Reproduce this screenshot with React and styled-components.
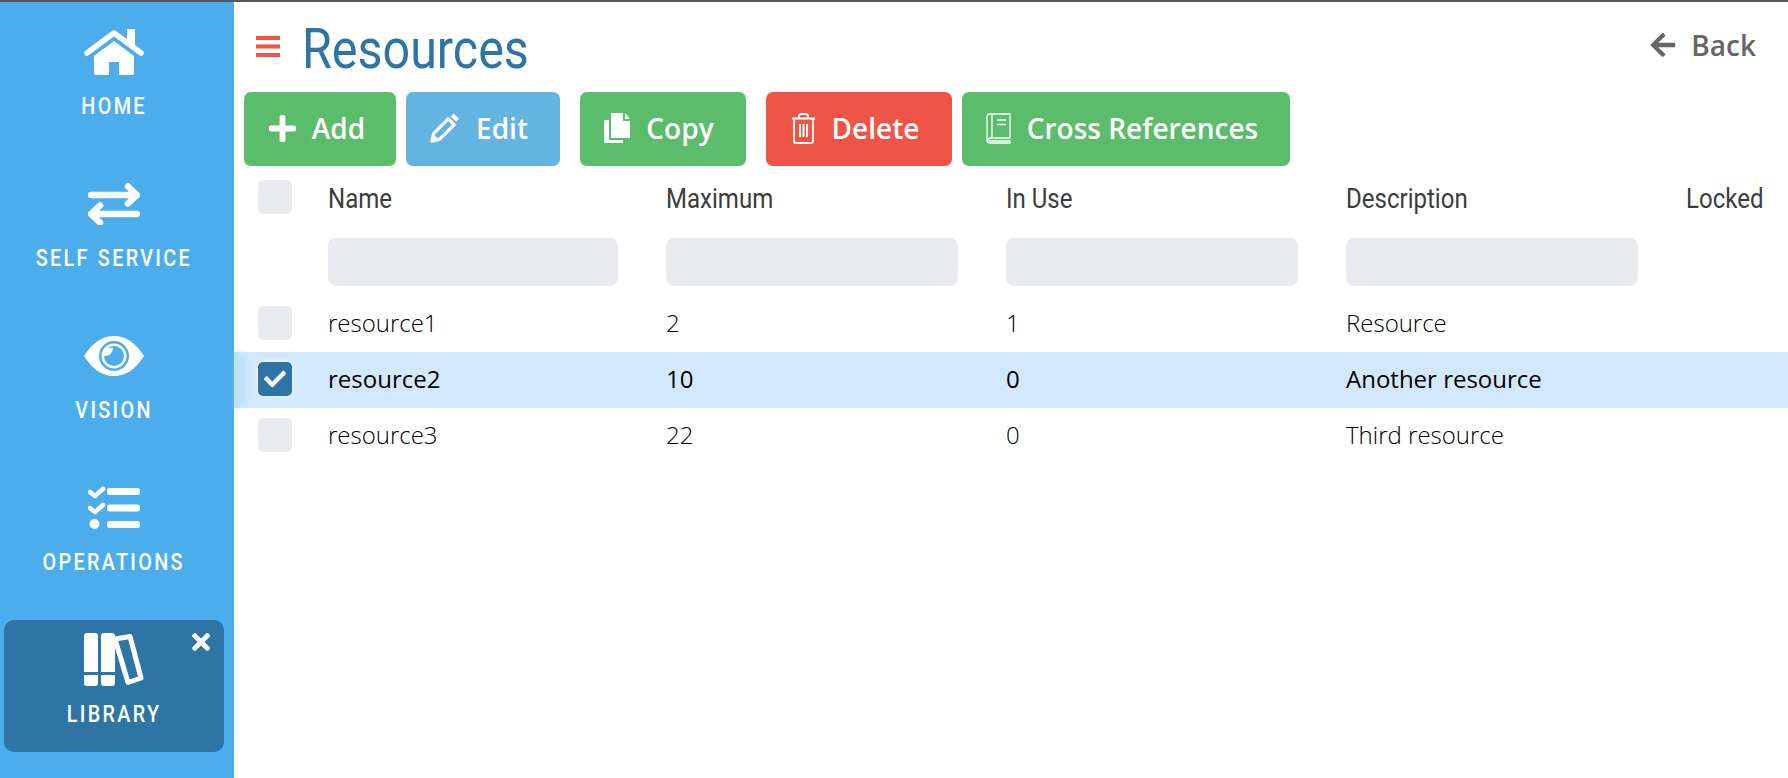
import React from 'react';
import styled, { createGlobalStyle } from 'styled-components';
import { FaPlus, FaArrowLeft, FaCheck, FaTimes } from 'react-icons/fa';

const GlobalStyle = createGlobalStyle`
  html, body {
    margin: 0;
    padding: 0;
    height: 100%;
    overflow: hidden;
    background: #fff;
  }
  #root { height: 100%; }
`;

const narrow = 'Roboto, "Liberation Sans", sans-serif';
const body = '"Open Sans", "Noto Sans", sans-serif';

const Page = styled.div`
  height: 100%;
  box-sizing: border-box;
  border-top: 2px solid #58585a;
  display: flex;
`;

const Sidebar = styled.nav`
  width: 234px;
  flex: none;
  box-sizing: border-box;
  background: #4badeb;
  padding: 0 10px 0 4px;
  display: flex;
  flex-direction: column;
`;

const NavItem = styled.a`
  position: relative;
  height: ${({ $active }) => ($active ? '132px' : '152px')};
  margin-top: ${({ $active }) => ($active ? '10px' : '0')};
  box-sizing: border-box;
  padding-top: ${({ $top }) => $top}px;
  border-radius: 10px;
  background: ${({ $active }) => ($active ? '#2e74a5' : 'transparent')};
  color: #fff;
  display: flex;
  flex-direction: column;
  align-items: center;
`;

const NavIcon = styled.div`
  height: ${({ $h }) => $h}px;
  display: flex;
  align-items: flex-end;
`;

const NavLabel = styled.span`
  margin-top: ${({ $gap }) => $gap}px;
  font-family: ${narrow};
  font-size: 23px;
  line-height: 26px;
  font-weight: 500;
  letter-spacing: 2.7px;
  word-spacing: 1px;
  white-space: nowrap;
  transform: scaleX(0.86);
`;

const CloseIcon = styled(FaTimes)`
  position: absolute;
  top: 9px;
  right: 10px;
  width: 26px;
  height: 26px;
`;

const Main = styled.main`
  flex: 1;
  min-width: 0;
  display: flex;
  flex-direction: column;
`;

const TitleBar = styled.header`
  height: 90px;
  box-sizing: border-box;
  padding: 0 32px 0 22px;
  display: flex;
  align-items: center;
  gap: 22px;
`;

const Menu = styled.svg`
  width: 24px;
  height: 22px;
`;

const Title = styled.h1`
  flex: 1;
  margin: 4px 0 0 0;
  font-family: ${narrow};
  font-size: 56px;
  line-height: 70px;
  font-weight: 400;
  color: #2e74a5;
  transform: scaleX(0.865);
  transform-origin: left center;
`;

const BackLink = styled.a`
  display: flex;
  align-items: center;
  gap: 14px;
  margin-top: -4px;
  font-family: ${body};
  font-size: 28px;
  font-weight: 600;
  color: #666;
`;

const Toolbar = styled.div`
  height: 74px;
  padding-left: 10px;
  display: flex;
`;

const Button = styled.button`
  width: ${({ $w }) => $w}px;
  margin-left: ${({ $gap }) => $gap || 0}px;
  height: 74px;
  border: 0;
  border-radius: 7px;
  padding: 0 8px 2px 0;
  background: ${({ $color }) => $color};
  color: #fff;
  display: flex;
  align-items: center;
  justify-content: center;
  gap: ${({ $iconGap }) => $iconGap}px;
  font-family: ${body};
  font-size: 28px;
  font-weight: 600;
`;

const Table = styled.div`
  display: flex;
  flex-direction: column;
`;

const Row = styled.div`
  position: relative;
  box-sizing: border-box;
  height: ${({ $h }) => $h}px;
  padding-top: ${({ $pt }) => $pt || 0}px;
  display: grid;
  grid-template-columns: 94px 338px 340px 340px 340px 1fr;
  align-items: ${({ $pt }) => ($pt ? 'start' : 'center')};
  background: ${({ $selected }) => ($selected ? '#d2e9fd' : 'transparent')};
`;

const SelectTab = styled.span`
  position: absolute;
  left: 0;
  top: 0;
  bottom: 0;
  width: 10px;
  border-radius: 0 8px 8px 0;
  background: #bfe1fb;
  box-shadow: 2px 0 5px rgba(191, 225, 251, 0.8);
`;

const Box = styled.span`
  margin: ${({ $cell }) => ($cell ? '-2px' : '0')} 0 0 24px;
  width: 34px;
  height: 34px;
  border-radius: 5px;
  background: ${({ $checked }) => ($checked ? '#2e74a5' : '#e9ebef')};
  box-shadow: ${({ $checked }) => ($checked ? '0 0 5px #fff' : 'none')};
  color: #fff;
  display: flex;
  align-items: center;
  justify-content: center;
`;

const Heading = styled.div`
  margin-top: 2px;
  font-family: ${narrow};
  font-size: 27px;
  line-height: 34px;
  font-weight: 400;
  color: #3c3c3c;
  white-space: nowrap;
  transform: scaleX(0.89);
  transform-origin: left center;
`;

const Filter = styled.div`
  width: ${({ $w }) => $w || 292}px;
  height: 48px;
  border-radius: 8px;
  background: #e9ebef;
`;

const Cell = styled.div`
  margin-top: -4px;
  font-family: ${body};
  font-size: 24px;
  font-weight: ${({ $selected }) => ($selected ? 500 : 300)};
  color: #000;
`;

const HomeIcon = () => (
  <svg width="60" height="46" viewBox="0 0 60 46" fill="#fff">
    <path d="M43 0h8v16h-8z" />
    <path d="M3 24 30 4l27 20" fill="none" stroke="#fff" strokeWidth="5.5" strokeLinecap="round" strokeLinejoin="round" />
    <path d="M10 27 30 12l20 15v17a2 2 0 0 1-2 2H35V33H25v13H12a2 2 0 0 1-2-2z" />
  </svg>
);

const ExchangeIcon = () => (
  <svg width="52" height="42" viewBox="0 0 52 42" fill="none" stroke="#fff" strokeWidth="6.5" strokeLinecap="round" strokeLinejoin="round">
    <path d="M3 12h45M40 3.500l9 8.500-9 8.500" />
    <path d="M49 31H4M12 22.500 3 31l9 8.500" />
  </svg>
);

const EyeIcon = () => (
  <svg width="60" height="40" viewBox="0 0 60 40">
    <path d="M0 20C8 7 18 0 30 0s22 7 30 20c-8 13-18 20-30 20S8 33 0 20z" fill="#fff" />
    <circle cx="30" cy="20" r="15" fill="#4badeb" />
    <circle cx="30" cy="20" r="12.500" fill="#fff" />
    <circle cx="30" cy="20" r="10" fill="#4badeb" />
    <path d="M20 12h9a8 8 0 0 1-8 8h-1z" fill="#fff" />
  </svg>
);

const TasksIcon = () => (
  <svg width="52" height="44" viewBox="0 0 52 44" fill="#fff">
    <rect x="19" y="3" width="33" height="7" rx="2.500" />
    <rect x="19" y="19.500" width="33" height="7" rx="2.500" />
    <rect x="19" y="36" width="33" height="7" rx="2.500" />
    <circle cx="6.500" cy="39" r="5" />
    <path d="M2 7l5 4 8-7M2 23l5 4 8-7" fill="none" stroke="#fff" strokeWidth="4.500" strokeLinecap="round" strokeLinejoin="round" />
  </svg>
);

const LibraryIcon = () => (
  <svg width="60" height="53" viewBox="0 0 60 53" fill="#fff">
    <path d="M3 0h8a3 3 0 0 1 3 3v36H0V3a3 3 0 0 1 3-3zM0 42h14v8a3 3 0 0 1-3 3H3a3 3 0 0 1-3-3z" />
    <path d="M20 0h8a3 3 0 0 1 3 3v36H17V3a3 3 0 0 1 3-3zM17 42h14v8a3 3 0 0 1-3 3h-8a3 3 0 0 1-3-3z" />
    <path d="M31 6l15-2.500L57 45l-13 4.500z" fill="none" stroke="#fff" strokeWidth="5" strokeLinejoin="round" />
  </svg>
);

const PencilIcon = () => (
  <svg width="29" height="30" viewBox="0 0 30 31" fill="none" stroke="#fff" strokeWidth="3.400" strokeLinejoin="round">
    <path d="M2 29l2-8L19 6l6 6-15 15z" />
    <path d="M22 3.500 24.500 1l5 5-2.500 2.500z" fill="#fff" strokeWidth="1" />
    <path d="M2 29l2-6 4 4z" fill="#fff" strokeWidth="1" />
  </svg>
);

const CopyIcon = () => (
  <svg width="26" height="30" viewBox="0 0 26 30" fill="#fff">
    <path d="M7 0h12v8h7v17H7z" />
    <path d="M21 0l5 6h-5z" />
    <path d="M0 7h5v20h14v3H0z" />
  </svg>
);

const TrashIcon = () => (
  <svg width="25" height="31" viewBox="0 0 25 31" fill="none" stroke="#fff" strokeWidth="1.800" strokeLinejoin="round">
    <path d="M1 5.500h23M8 5V2.500L9.500 1h6L17 2.500V5" />
    <path d="M3 5.500V28a2 2 0 0 0 2 2h15a2 2 0 0 0 2-2V5.500" />
    <path d="M9 11v13M12.500 11v13M16 11v13" strokeWidth="2" />
  </svg>
);

const BookIcon = () => (
  <svg width="25" height="31" viewBox="0 0 25 31" fill="none" stroke="#fff" strokeWidth="1.300">
    <path d="M24 1H3.500A2.500 2.500 0 0 0 1 3.500V27a3 3 0 0 0 3 3h20v-2H4a1.500 1.500 0 0 1 0-3h20z" />
    <path d="M6 1v24M11 7h9M11 11.500h9" />
  </svg>
);

const navItems = [
  { label: 'HOME', icon: <HomeIcon />, top: 27, h: 46, gap: 19 },
  { label: 'SELF SERVICE', icon: <ExchangeIcon />, top: 29, h: 42, gap: 21 },
  { label: 'VISION', icon: <EyeIcon />, top: 30, h: 40, gap: 22 },
  { label: 'OPERATIONS', icon: <TasksIcon />, top: 27, h: 44, gap: 21 },
];

const columns = ['Name', 'Maximum', 'In Use', 'Description', 'Locked'];

const resources = [
  { name: 'resource1', max: 2, used: 1, description: 'Resource' },
  { name: 'resource2', max: 10, used: 0, description: 'Another resource', selected: true },
  { name: 'resource3', max: 22, used: 0, description: 'Third resource' },
];

export default function App() {
  return (
    <>
      <GlobalStyle />
      <Page>
        <Sidebar>
          {navItems.map(item => (
            <NavItem key={item.label} $top={item.top}>
              <NavIcon $h={item.h}>{item.icon}</NavIcon>
              <NavLabel $gap={item.gap}>{item.label}</NavLabel>
            </NavItem>
          ))}
          <NavItem $active $top={13}>
            <CloseIcon />
            <NavIcon $h={53}><LibraryIcon /></NavIcon>
            <NavLabel $gap={16}>LIBRARY</NavLabel>
          </NavItem>
        </Sidebar>
        <Main>
          <TitleBar>
            <Menu viewBox="0 0 24 22" fill="#ef5446">
              <rect y="0" width="24" height="4" />
              <rect y="8.500" width="24" height="4" />
              <rect y="17" width="24" height="4" />
            </Menu>
            <Title>Resources</Title>
            <BackLink><FaArrowLeft size={28} />Back</BackLink>
          </TitleBar>
          <Toolbar>
            <Button $w={152} $color="#5bbd6b" $iconGap={14}><FaPlus size={31} />Add</Button>
            <Button $w={154} $gap={10} $color="#64b4e2" $iconGap={17}><PencilIcon />Edit</Button>
            <Button $w={166} $gap={20} $color="#5bbd6b" $iconGap={16}><CopyIcon />Copy</Button>
            <Button $w={186} $gap={20} $color="#ee5546" $iconGap={16}><TrashIcon />Delete</Button>
            <Button $w={328} $gap={10} $color="#5bbd6b" $iconGap={16}><BookIcon />Cross References</Button>
          </Toolbar>
          <Table>
            <Row $h={62} $pt={14}>
              <Box />
              {columns.map(name => <Heading key={name}>{name}</Heading>)}
            </Row>
            <Row $h={68}>
              <span />
              <Filter $w={290} />
              <Filter />
              <Filter />
              <Filter />
            </Row>
            {resources.map(resource => {
              const { selected } = resource;
              return (
                <Row key={resource.name} $h={56} $selected={selected}>
                  {selected && <SelectTab />}
                  <Box $cell $checked={selected}>{selected && <FaCheck size={22} />}</Box>
                  <Cell $selected={selected}>{resource.name}</Cell>
                  <Cell $selected={selected}>{resource.max}</Cell>
                  <Cell $selected={selected}>{resource.used}</Cell>
                  <Cell $selected={selected}>{resource.description}</Cell>
                </Row>
              );
            })}
          </Table>
        </Main>
      </Page>
    </>
  );
}
